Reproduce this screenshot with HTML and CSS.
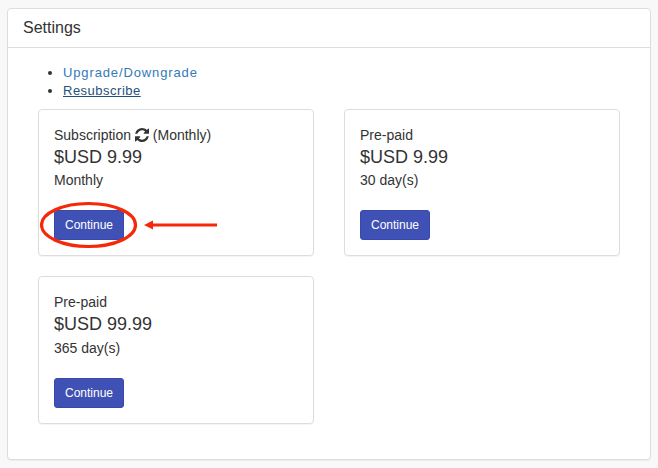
FILE: index.html
```html
<!DOCTYPE html>
<html lang="en">
<head>
<meta charset="utf-8">
<title>Settings</title>
<link rel="stylesheet" href="styles.css">
</head>
<body>
<section class="panel">
  <header class="panel-heading">Settings</header>
  <div class="panel-body">
    <ul class="links">
      <li><a class="link" href="#">Upgrade/Downgrade</a></li>
      <li><a class="link active" href="#">Resubscribe</a></li>
    </ul>
    <div class="plans">
      <article class="plan">
        <div class="plan-type">Subscription
          <svg class="refresh" viewBox="128 128 1536 1536" width="14" height="14" aria-hidden="true"><path d="M1639 1056q0 5-1 7-64 268-268 434.5t-478 166.5q-146 0-282.5-55t-243.5-157l-129 129q-19 19-45 19t-45-19-19-45v-448q0-26 19-45t45-19h448q26 0 45 19t19 45-19 45l-137 137q71 66 161 102t187 36q134 0 250-65t186-179q11-17 53-117 8-23 30-23h192q13 0 22.5 9.5t9.5 22.5zm25-800v448q0 26-19 45t-45 19h-448q-26 0-45-19t-19-45 19-45l138-138q-148-137-349-137-134 0-250 65t-186 179q-11 17-53 117-8 23-30 23h-199q-13 0-22.5-9.5t-9.5-22.5v-7q65-268 270-434.5t480-166.5q146 0 284 55.5t245 156.5l130-129q19-19 45-19t45 19 19 45z"/></svg>
          (Monthly)</div>
        <div class="plan-price">$USD 9.99</div>
        <div class="plan-term">Monthly</div>
        <button class="btn" type="button">Continue</button>
        <svg class="callout" viewBox="0 0 182 64" width="182" height="64" aria-hidden="true">
          <ellipse cx="48.5" cy="31" rx="47" ry="21.5" fill="none" stroke="#f5290a" stroke-width="3.2"/>
          <path d="M104 31L113 26.5V29.5H177V32.5H113V35.5Z" fill="#f5290a"/>
        </svg>
      </article>
      <article class="plan">
        <div class="plan-type">Pre-paid</div>
        <div class="plan-price">$USD 9.99</div>
        <div class="plan-term">30 day(s)</div>
        <button class="btn" type="button">Continue</button>
      </article>
      <article class="plan">
        <div class="plan-type">Pre-paid</div>
        <div class="plan-price">$USD 99.99</div>
        <div class="plan-term">365 day(s)</div>
        <button class="btn" type="button">Continue</button>
      </article>
    </div>
  </div>
</section>
</body>
</html>
```
FILE: styles.css
```css
* { box-sizing: border-box; }
html, body { height: 100%; }
body {
  margin: 0;
  padding: 8px 7px;
  background: #f8f8f8;
  color: #333;
  font-family: "Liberation Sans", Arial, sans-serif;
  font-size: 14px;
  line-height: 20px;
  overflow: hidden;
}
.panel {
  height: 452px;
  background: #fff;
  border: 1px solid #ddd;
  border-radius: 4px;
  box-shadow: 0 1px 1px rgba(0,0,0,.05);
}
.panel-heading {
  height: 39px;
  padding: 9px 15px 0;
  border-bottom: 1px solid #ddd;
  font-size: 16px;
  line-height: 20px;
}
.panel-body { padding: 16px 30px 0; }
.links {
  margin: 0 0 9px;
  padding: 0 0 0 25px;
  font-size: 13px;
  line-height: 18px;
}
.link { color: #337ab7; text-decoration: none; letter-spacing: .87px; }
.link.active { color: #23527c; text-decoration: underline; letter-spacing: .5px; }
.plans {
  display: grid;
  grid-template-columns: 276px 276px;
  column-gap: 30px;
  row-gap: 20px;
}
.plan {
  position: relative;
  height: 147.4px;
  padding: 15px;
  border: 1px solid #ddd;
  border-radius: 4px;
  box-shadow: 0 1px 1px rgba(0,0,0,.05);
}
.plan-type { height: 20px; }
.plan-price { height: 25px; font-size: 18px; line-height: 24px; }
.plan-term { height: 20px; margin-top: .2px; }
.refresh { vertical-align: -2px; fill: #333; }
.btn {
  display: block;
  width: 70px;
  height: 30px;
  margin-top: 20px;
  padding: 0;
  background: #3f51b5;
  border: 1px solid #3949ab;
  border-radius: 3px;
  color: #fff;
  font: 12px/18px "Liberation Sans", Arial, sans-serif;
}
.callout {
  position: absolute;
  left: 1px;
  top: 84px;
}
```
